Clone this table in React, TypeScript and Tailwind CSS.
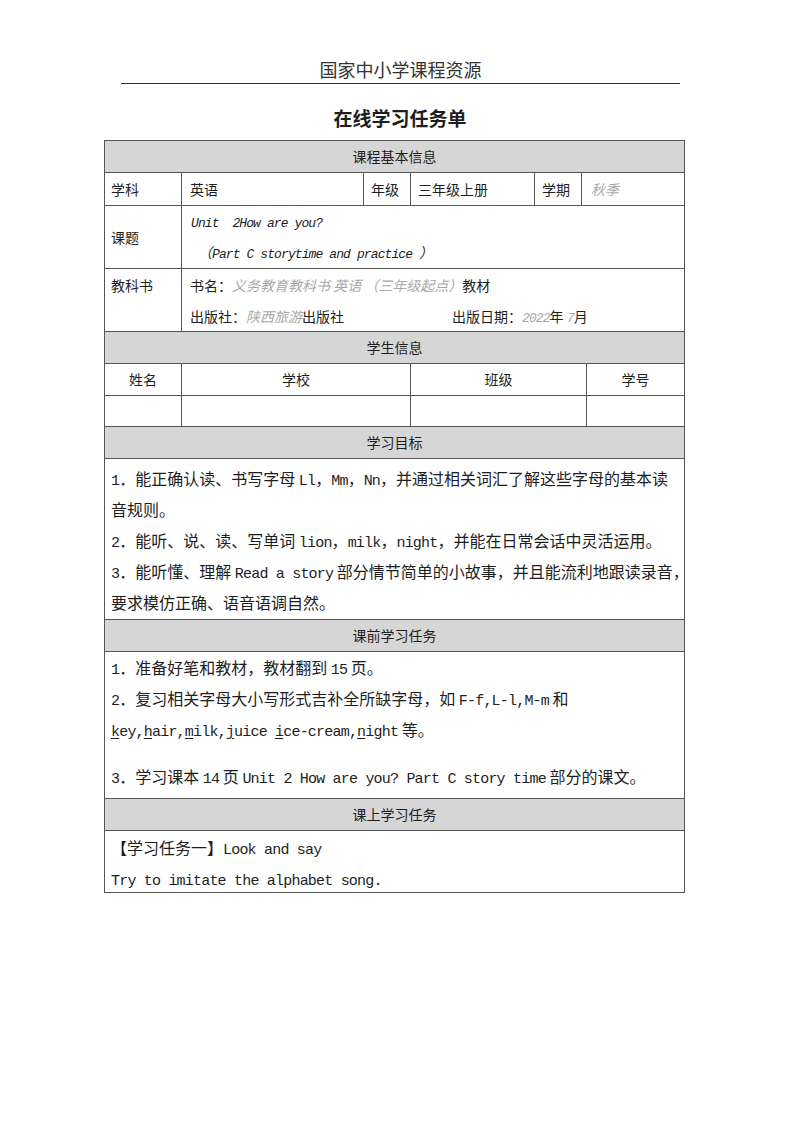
import React from 'react'

// Latin text inside the sheet is set in a fixed-width face, like the original document
function M({ children, small, italic, gray }: { children: React.ReactNode; small?: boolean; italic?: boolean; gray?: boolean }) {
  return (
    <span
      className={`font-['Liberation_Mono',monospace] ${small ? 'text-[13px] tracking-[-0.9px]' : 'text-[15px] tracking-[-0.8px]'} ${italic ? 'italic' : ''} ${gray ? 'text-[#a8a8a8]' : ''}`}
    >
      {children}
    </span>
  )
}

function G({ children }: { children: React.ReactNode }) {
  return <span className="italic text-[#a8a8a8]">{children}</span>
}

function U({ children }: { children: React.ReactNode }) {
  return <span className="underline underline-offset-2">{children}</span>
}

function SectionHeader({ title }: { title: string }) {
  return (
    <div className="h-[32px] border-t border-[#555] bg-[#d6d6d6] flex items-center justify-center text-[14px]">
      {title}
    </div>
  )
}

function Line({ children }: { children: React.ReactNode }) {
  return <div className="h-[31px] leading-[31px] whitespace-nowrap">{children}</div>
}

export default function App() {
  return (
    <div className="w-[800px] h-[1132px] bg-white text-[#1e1e1e] font-['Noto_Sans_CJK_SC',sans-serif]">
      {/* Page header */}
      <div className="pt-[57px] mx-[121px] mr-[120px] border-b-[1.5px] border-[#333]">
        <div className="text-center text-[18px] leading-[25px] text-[#333] pb-[1px]">国家中小学课程资源</div>
      </div>
      <div className="mt-[21px] text-center text-[19px] font-bold leading-[26px]">在线学习任务单</div>

      {/* Sheet */}
      <div className="mt-[9px] ml-[104px] w-[581px] border border-[#555] text-[14px]">
        <div className="h-[31px] bg-[#d6d6d6] flex items-center justify-center">课程基本信息</div>

        {/* 学科 row */}
        <div className="h-[33px] border-t border-[#555] flex">
          <div className="w-[76px] px-[6px] flex items-center">学科</div>
          <div className="w-[182px] border-l border-[#555] px-[8px] flex items-center">英语</div>
          <div className="w-[47px] border-l border-[#555] px-[7px] flex items-center">年级</div>
          <div className="w-[124px] border-l border-[#555] px-[7px] flex items-center">三年级上册</div>
          <div className="w-[47px] border-l border-[#555] px-[7px] flex items-center">学期</div>
          <div className="flex-1 border-l border-[#555] px-[9px] flex items-center">
            <G>秋季</G>
          </div>
        </div>

        {/* 课题 row */}
        <div className="h-[63px] border-t border-[#555] flex">
          <div className="w-[76px] px-[6px] flex items-center">课题</div>
          <div className="flex-1 border-l border-[#555] px-[9px]">
            <Line>
              <M small italic>Unit&nbsp;&nbsp;2How are you?</M>
            </Line>
            <Line>
              <span className="pl-[7px] italic">（</span>
              <M small italic>Part C storytime and practice </M>
              <span className="italic">）</span>
            </Line>
          </div>
        </div>

        {/* 教科书 row */}
        <div className="h-[63px] border-t border-[#555] flex">
          <div className="w-[76px] px-[6px] pt-[1px]">
            <Line>教科书</Line>
          </div>
          <div className="flex-1 border-l border-[#555] px-[8px] pt-[1px]">
            <Line>
              书名：<G>义务教育教科书 英语 （三年级起点）</G>教材
            </Line>
            <div className="h-[31px] leading-[31px] flex whitespace-nowrap">
              <div className="w-[262px]">
                出版社：<G>陕西旅游</G>出版社
              </div>
              <div>
                出版日期：<M small italic gray>2022</M>年 <M small italic gray>7</M>月
              </div>
            </div>
          </div>
        </div>

        <SectionHeader title="学生信息" />
        <div className="h-[32px] border-t border-[#555] flex">
          <div className="w-[76px] flex items-center justify-center">姓名</div>
          <div className="w-[229px] border-l border-[#555] flex items-center justify-center">学校</div>
          <div className="w-[176px] border-l border-[#555] flex items-center justify-center">班级</div>
          <div className="flex-1 border-l border-[#555] flex items-center justify-center">学号</div>
        </div>
        <div className="h-[31px] border-t border-[#555] flex">
          <div className="w-[76px]" />
          <div className="w-[229px] border-l border-[#555]" />
          <div className="w-[176px] border-l border-[#555]" />
          <div className="flex-1 border-l border-[#555]" />
        </div>

        <SectionHeader title="学习目标" />
        <div className="h-[161px] border-t border-[#555] px-[6px] pt-[4px] text-[16px]">
          <Line>
            <M>1</M>．能正确认读、书写字母 <M>Ll</M>，<M>Mm</M>，<M>Nn</M>，并通过相关词汇了解这些字母的基本读
          </Line>
          <Line>音规则。</Line>
          <Line>
            <M>2</M>．能听、说、读、写单词 <M>lion</M>，<M>milk</M>，<M>night</M>，并能在日常会话中灵活运用。
          </Line>
          <Line>
            <M>3</M>．能听懂、理解 <M>Read a story</M> 部分情节简单的小故事，并且能流利地跟读录音，
          </Line>
          <Line>要求模仿正确、语音语调自然。</Line>
        </div>

        <SectionHeader title="课前学习任务" />
        <div className="h-[147px] border-t border-[#555] px-[6px] text-[16px]">
          <Line>
            <M>1</M>．准备好笔和教材，教材翻到 <M>15</M> 页。
          </Line>
          <Line>
            <M>2</M>．复习相关字母大小写形式吉补全所缺字母，如 <M>F-f,L-l,M-m</M> 和
          </Line>
          <Line>
            <M>
              <U>k</U>ey,<U>h</U>air,<U>m</U>ilk,<U>j</U>uice <U>i</U>ce-cream,<U>n</U>ight
            </M>{' '}
            等。
          </Line>
          <div className="h-[16px]" />
          <Line>
            <M>3</M>．学习课本 <M>14</M> 页 <M>Unit 2 How are you? Part C story time</M> 部分的课文。
          </Line>
        </div>

        <SectionHeader title="课上学习任务" />
        <div className="h-[62px] border-t border-[#555] px-[6px] pt-[1px] text-[16px]">
          <Line>
            【学习任务一】<M>Look and say</M>
          </Line>
          <Line>
            <M>Try to imitate the alphabet song.</M>
          </Line>
        </div>
      </div>
    </div>
  )
}
